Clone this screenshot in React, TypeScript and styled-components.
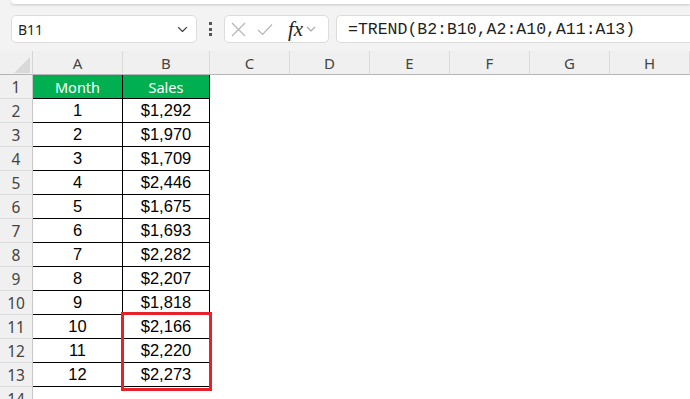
import React from "react";
import styled, { createGlobalStyle, css } from "styled-components";

const GlobalStyle = createGlobalStyle`
  html, body {
    margin: 0;
    padding: 0;
    background: #ffffff;
    overflow: hidden;
  }
`;

const Shell = styled.div`
  width: 690px;
  height: 399px;
  overflow: hidden;
  background: #ffffff;
  font-family: "Noto Sans", "Open Sans", sans-serif;
`;

const TopBar = styled.div`
  background: #f3f3f3;
  height: 51px;
  display: flex;
  flex-direction: column;
`;

const Ribbon = styled.div`
  height: 4px;
  margin-left: 11px;
  background: #ffffff;
  border-radius: 0 0 0 6px;
  box-shadow: 0 1px 3px rgba(0, 0, 0, 0.18);
`;

const FormulaRow = styled.div`
  display: flex;
  align-items: center;
  padding: 11px 0 0 11px;
`;

const Box = styled.div`
  box-sizing: border-box;
  height: 28px;
  background: #ffffff;
  border: 1px solid #dcdcdc;
  border-radius: 5px;
  display: flex;
  align-items: center;
`;

const NameBox = styled(Box)`
  width: 186px;
  padding: 0 8px 0 6px;
  justify-content: space-between;
  font-size: 14px;
  color: #1f1f1f;
`;

const Dots = styled.div`
  width: 27px;
  display: flex;
  flex-direction: column;
  align-items: center;
  gap: 2.5px;
  span {
    width: 3px;
    height: 3px;
    background: #555555;
  }
`;

const FxBox = styled(Box)`
  width: 105px;
  padding: 0 0 0 6px;
  gap: 11px;
`;

const Fx = styled.span`
  font-family: "Liberation Serif", "DejaVu Serif", serif;
  font-style: italic;
  font-size: 21px;
  color: #222222;
  margin-left: 4px;
  margin-right: -8px;
  line-height: 1;
`;

const FormulaBox = styled(Box)`
  margin-left: 7px;
  flex: 1;
  border-right: none;
  border-radius: 5px 0 0 5px;
  padding-left: 11px;
  font-family: "Liberation Mono", "DejaVu Sans Mono", monospace;
  font-size: 16.5px;
  color: #1f1f1f;
  white-space: nowrap;
`;

const Sheet = styled.div`
  position: relative;
`;

const Grid = styled.div`
  display: grid;
  grid-template-columns: 33px 90px 87px repeat(6, 80px);
  grid-auto-rows: 24px;
`;

const Corner = styled.div`
  box-sizing: border-box;
  background: #f0f0f0;
  border-right: 1px solid #d6d6d6;
  border-bottom: 1px solid #b4b4b4;
  svg {
    display: block;
  }
`;

const ColHead = styled.div`
  box-sizing: border-box;
  background: #f0f0f0;
  border-right: 1px solid #dadada;
  border-bottom: 1px solid #b4b4b4;
  display: flex;
  align-items: center;
  justify-content: center;
  font-size: 15px;
  color: #444444;
`;

const RowHead = styled.div`
  box-sizing: border-box;
  background: #f0f0f0;
  border-right: 1px solid #c8c8c8;
  border-bottom: 1px solid #dcdcdc;
  display: flex;
  align-items: center;
  justify-content: center;
  font-size: 15.5px;
  color: #444444;
`;

type CellKind = "head" | "data" | "blank";

const Cell = styled.div<{ $kind: CellKind }>`
  box-sizing: border-box;
  display: flex;
  align-items: center;
  justify-content: center;
  ${({ $kind }) =>
    $kind === "head" &&
    css`
      background: #00b050;
      color: #ffffff;
      font-family: "Noto Sans", "Open Sans", sans-serif;
      font-size: 14.5px;
      border-right: 1px solid #000000;
      border-bottom: 1px solid #000000;
    `}
  ${({ $kind }) =>
    $kind === "data" &&
    css`
      background: #ffffff;
      color: #000000;
      font-family: "Liberation Sans", Arial, sans-serif;
      font-size: 16.5px;
      border-right: 1px solid #000000;
      border-bottom: 1px solid #000000;
    `}
`;

const Highlight = styled.div`
  position: absolute;
  left: 121px;
  top: 261px;
  width: 91px;
  height: 79px;
  box-sizing: border-box;
  border: 3px solid #e8202a;
  pointer-events: none;
`;

const Chevron = ({ color, size }: { color: string; size: number }) => (
  <svg width={size} height={size * 0.6} viewBox="0 0 10 6">
    <path d="M1 1 L5 5 L9 1" fill="none" stroke={color} strokeWidth="1.2" />
  </svg>
);

const columns = ["A", "B", "C", "D", "E", "F", "G", "H"];
const sales = [
  "$1,292",
  "$1,970",
  "$1,709",
  "$2,446",
  "$1,675",
  "$1,693",
  "$2,282",
  "$2,207",
  "$1,818",
  "$2,166",
  "$2,220",
  "$2,273",
];

const App: React.FC = () => {
  const rows: { a: string; b: string; kind: CellKind }[] = [
    { a: "Month", b: "Sales", kind: "head" },
    ...sales.map((s, i) => ({ a: String(i + 1), b: s, kind: "data" as CellKind })),
    { a: "", b: "", kind: "blank" },
  ];

  return (
    <Shell>
      <GlobalStyle />
      <TopBar>
        <Ribbon />
        <FormulaRow>
          <NameBox>
            <span>B11</span>
            <Chevron color="#444" size={11} />
          </NameBox>
          <Dots>
            <span />
            <span />
            <span />
          </Dots>
          <FxBox>
            <svg width="15" height="15" viewBox="0 0 15 15">
              <path d="M1 1 L14 14 M14 1 L1 14" stroke="#b4b4b4" strokeWidth="1.1" fill="none" />
            </svg>
            <svg width="16" height="13" viewBox="0 0 16 13">
              <path d="M1 7 L5.5 11.5 L15 1.5" stroke="#b4b4b4" strokeWidth="1.1" fill="none" />
            </svg>
            <Fx>fx</Fx>
            <Chevron color="#aaa" size={10} />
          </FxBox>
          <FormulaBox>=TREND(B2:B10,A2:A10,A11:A13)</FormulaBox>
        </FormulaRow>
      </TopBar>
      <Sheet>
        <Grid>
          <Corner>
            <svg width="32" height="23" viewBox="0 0 32 23">
              <polygon points="14,22 30,6 30,22" fill="#d9d9d9" />
            </svg>
          </Corner>
          {columns.map((c) => (
            <ColHead key={c}>{c}</ColHead>
          ))}
          {rows.map((r, i) => (
            <React.Fragment key={i}>
              <RowHead>{i + 1}</RowHead>
              <Cell $kind={r.kind}>{r.a}</Cell>
              <Cell $kind={r.kind}>{r.b}</Cell>
              {columns.slice(2).map((c) => (
                <Cell key={c} $kind="blank" />
              ))}
            </React.Fragment>
          ))}
        </Grid>
        <Highlight />
      </Sheet>
    </Shell>
  );
};

export default App;
